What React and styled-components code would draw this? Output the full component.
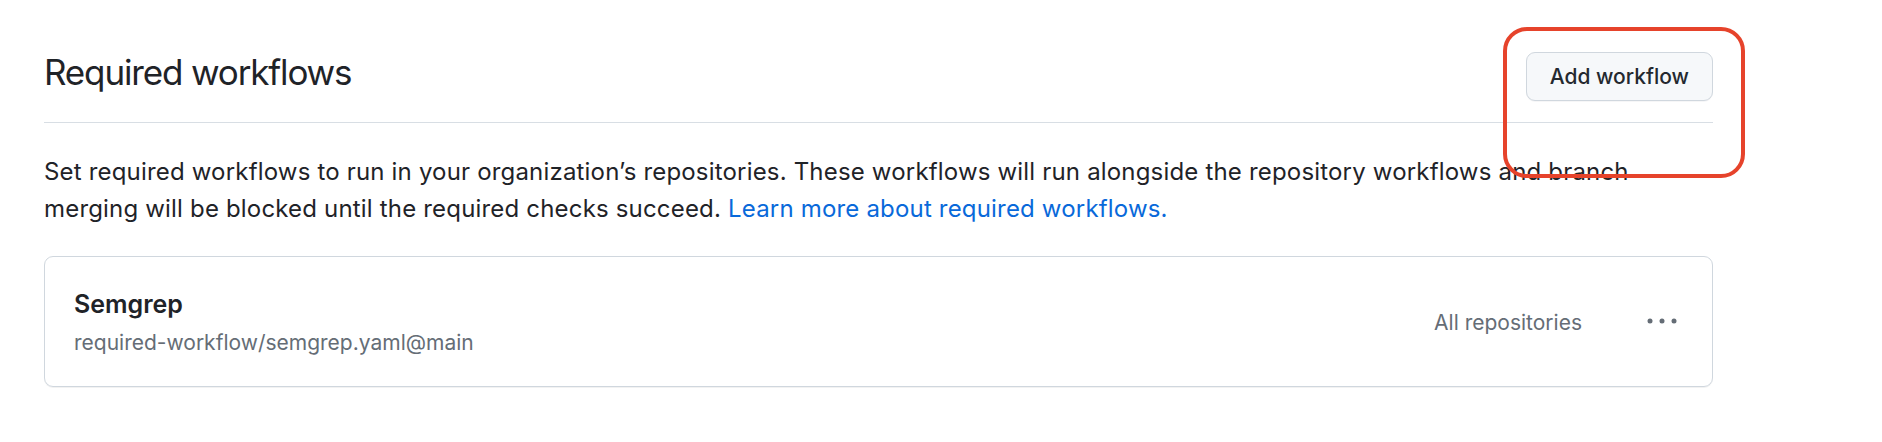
import React from "react";
import styled, { createGlobalStyle } from "styled-components";

const GlobalStyle = createGlobalStyle`
  html, body {
    margin: 0;
    padding: 0;
    background: #ffffff;
  }
  body {
    font-family: Inter, "Noto Sans", "Liberation Sans", sans-serif;
    color: #1f2328;
    -webkit-font-smoothing: antialiased;
  }
  * { box-sizing: border-box; }
`;

const Page = styled.div`
  position: relative;
  box-sizing: content-box;
  width: 1669px;
  padding: 0 0 40px 44px;
`;

const Header = styled.div`
  display: flex;
  justify-content: space-between;
  align-items: flex-start;
  padding: 45px 0 21px;
  border-bottom: 1px solid #d8dee4;
`;

const Title = styled.h2`
  margin: 0;
  font-size: 35px;
  font-weight: 400;
  letter-spacing: -1.15px;
  line-height: 54px;
  color: #1f2328;
`;

const Button = styled.button`
  margin-top: 7px;
  height: 49px;
  padding: 0 23px;
  display: inline-flex;
  align-items: center;
  justify-content: center;
  font-family: inherit;
  font-size: 21px;
  font-weight: 500;
  color: #24292f;
  background: #f6f8fa;
  border: 1px solid #d0d7de;
  border-radius: 9px;
  box-shadow: 0 1px 0 rgba(31, 35, 40, 0.04);
  cursor: pointer;
`;

const Description = styled.p`
  margin: 30px 0 0;
  max-width: 1646px;
  font-size: 24px;
  letter-spacing: 0.18px;
  line-height: 37px;
  color: #1f2328;
`;

const Link = styled.a`
  color: #0969da;
  text-decoration: none;
`;

const Card = styled.div`
  margin-top: 29px;
  display: flex;
  align-items: center;
  justify-content: space-between;
  padding: 29px 35px 28px 29px;
  border: 1px solid #d0d7de;
  border-radius: 9px;
  box-shadow: 0 1px 0 rgba(31, 35, 40, 0.06);
`;

const RowMain = styled.div`
  display: flex;
  flex-direction: column;
`;

const RowTitle = styled.div`
  font-size: 25px;
  font-weight: 600;
  line-height: 36px;
  color: #1f2328;
`;

const RowPath = styled.div`
  margin-top: 6px;
  font-size: 21px;
  line-height: 30px;
  color: #656d76;
`;

const RowMeta = styled.div`
  display: flex;
  align-items: center;
  gap: 65px;
`;

const Scope = styled.span`
  font-size: 21px;
  line-height: 31px;
  color: #656d76;
`;

const Kebab = styled.svg`
  display: block;
  width: 30px;
  height: 10px;
  color: #656d76;
  margin-top: -3px;
`;

const Annotation = styled.div`
  position: absolute;
  left: 1503px;
  top: 27px;
  width: 242px;
  height: 151px;
  border: 4px solid #e6432b;
  border-radius: 24px;
  pointer-events: none;
`;

export default function App() {
  return (
    <>
      <GlobalStyle />
      <Page>
        <Header>
          <Title>Required workflows</Title>
          <Button type="button">Add workflow</Button>
        </Header>
        <Description>
          Set required workflows to run in your organization’s repositories. These workflows will run alongside the repository workflows and branch merging will be blocked until the required checks succeed.{" "}
          <Link href="#">Learn more about required workflows.</Link>
        </Description>
        <Card>
          <RowMain>
            <RowTitle>Semgrep</RowTitle>
            <RowPath>required-workflow/semgrep.yaml@main</RowPath>
          </RowMain>
          <RowMeta>
            <Scope>All repositories</Scope>
            <Kebab viewBox="0 0 30 10" aria-hidden="true">
              <circle cx="3" cy="5" r="2.5" fill="currentColor" />
              <circle cx="15" cy="5" r="2.5" fill="currentColor" />
              <circle cx="27" cy="5" r="2.5" fill="currentColor" />
            </Kebab>
          </RowMeta>
        </Card>
        <Annotation />
      </Page>
    </>
  );
}
